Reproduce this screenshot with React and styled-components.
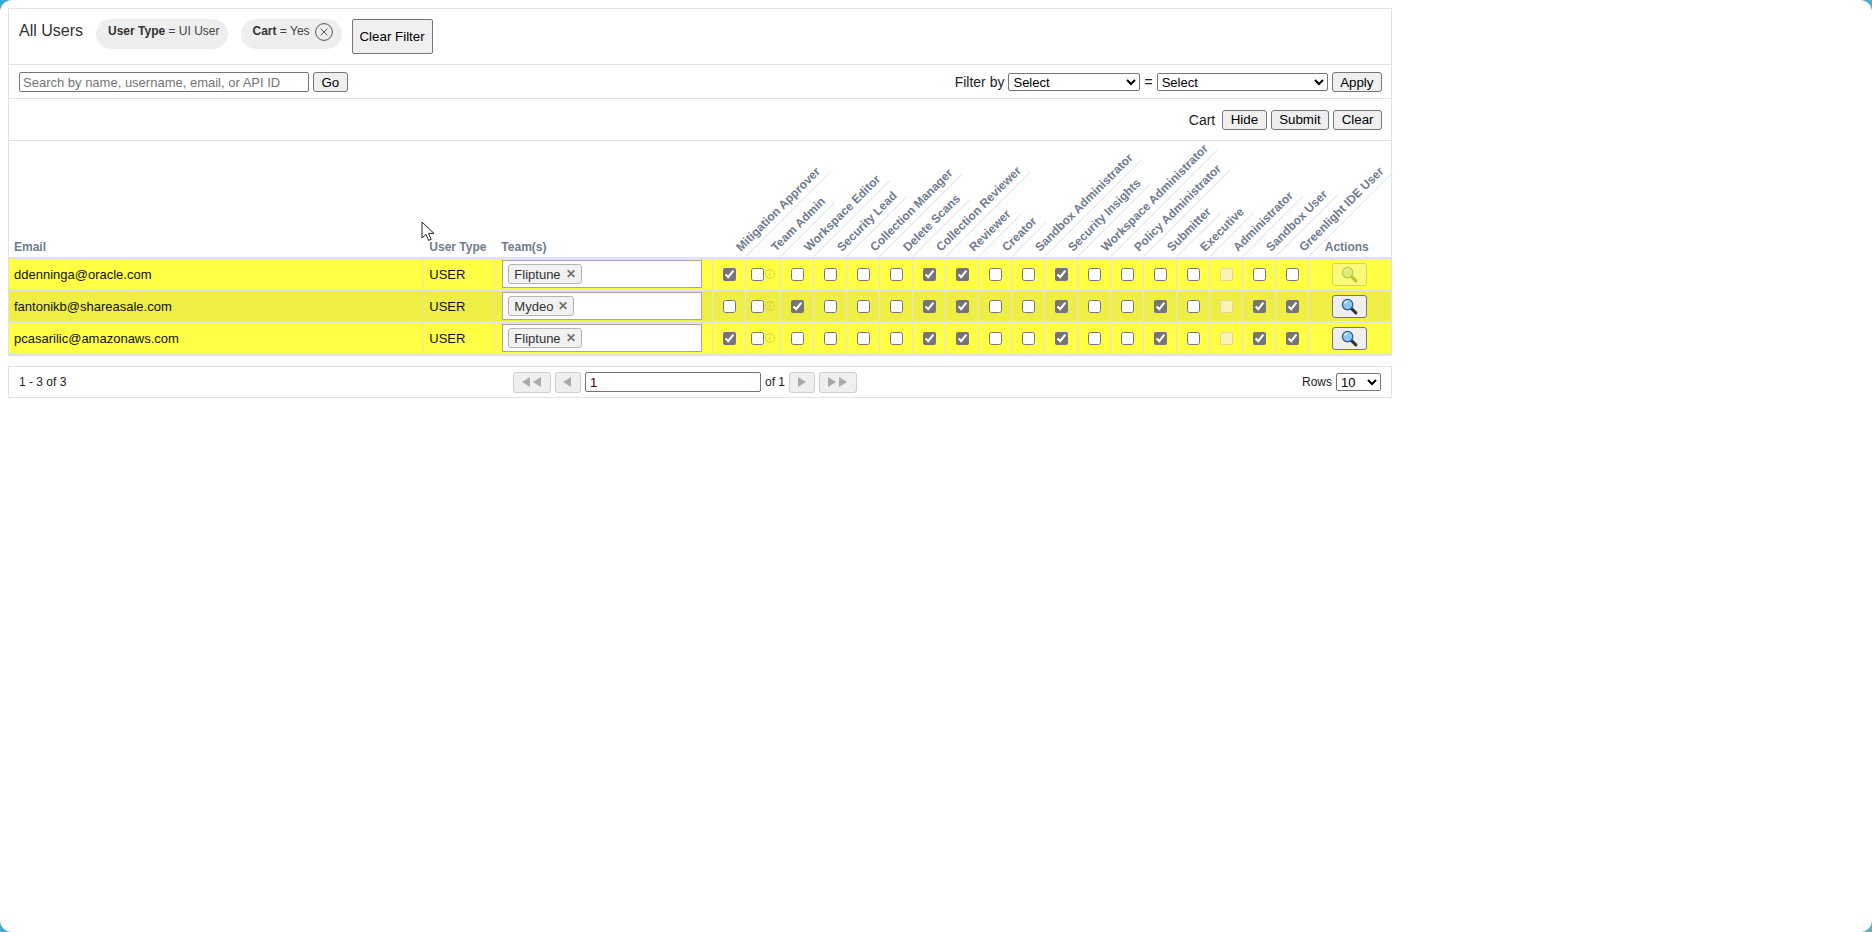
import React from 'react';
import styled, { createGlobalStyle } from 'styled-components';

const roles = [
  'Mitigation Approver', 'Team Admin', 'Workspace Editor', 'Security Lead', 'Collection Manager', 'Delete Scans',
  'Collection Reviewer', 'Reviewer', 'Creator', 'Sandbox Administrator', 'Security Insights', 'Workspace Administrator',
  'Policy Administrator', 'Submitter', 'Executive', 'Administrator', 'Sandbox User', 'Greenlight IDE User',
];

const users = [
  { email: 'ddenninga@oracle.com', team: 'Fliptune', checked: [0, 6, 7, 10], locked: true },
  { email: 'fantonikb@shareasale.com', team: 'Mydeo', checked: [2, 6, 7, 10, 13, 16, 17], alt: true },
  { email: 'pcasarilic@amazonaws.com', team: 'Fliptune', checked: [0, 6, 7, 10, 13, 16, 17] },
];

function App() {
  return (
    <>
      <GlobalStyle />
      <Page>
        <Panel>
          <TitleBar>
            <Title>All Users</Title>
            <FilterChip>
              <b>User Type</b> = UI User
            </FilterChip>
            <FilterChip $closable>
              <b>Cart</b> = Yes
              <ChipClose viewBox="0 0 18 18">
                <circle cx="9" cy="9" r="8.4" fill="none" stroke="#555" strokeWidth="1" />
                <path d="M5.6 5.6l6.8 6.8M12.4 5.6l-6.8 6.8" stroke="#555" strokeWidth="1" fill="none" />
              </ChipClose>
            </FilterChip>
            <ClearFilter>Clear Filter</ClearFilter>
          </TitleBar>

          <SearchBar>
            <SearchInput placeholder="Search by name, username, email, or API ID" />
            <Button>Go</Button>
            <FilterGroup>
              <Label>Filter by</Label>
              <Select $width={132}><option>Select</option></Select>
              <Label>=</Label>
              <Select $width={171}><option>Select</option></Select>
              <Button>Apply</Button>
            </FilterGroup>
          </SearchBar>

          <CartBar>
            <CartLabel>Cart</CartLabel>
            <Button>Hide</Button>
            <Button>Submit</Button>
            <Button>Clear</Button>
          </CartBar>

          <Table>
            <colgroup>
              <col style={{ width: 414 }} />
              <col style={{ width: 72 }} />
              <col style={{ width: 217 }} />
              <col style={{ width: 33 }} />
              <col style={{ width: 35 }} />
              {roles.slice(2).map(r => <col key={r} style={{ width: 33 }} />)}
              <col style={{ width: 82 }} />
            </colgroup>
            <thead>
              <tr>
                <Th $pad={5}>Email</Th>
                <Th $pad={6}>User Type</Th>
                <Th $pad={6}>Team(s)</Th>
                {roles.map(role => (
                  <RoleTh key={role}>
                    <RoleLabel>{role}</RoleLabel>
                  </RoleTh>
                ))}
                <ActionsTh>Actions</ActionsTh>
              </tr>
            </thead>
            <tbody>
              {users.map(user => (
                <Row key={user.email} $alt={user.alt}>
                  <Td>{user.email}</Td>
                  <Td $pad={6}>USER</Td>
                  <TeamTd>
                    <TeamBox>
                      <TeamChip>
                        {user.team}
                        <TeamRemove>✕</TeamRemove>
                      </TeamChip>
                    </TeamBox>
                  </TeamTd>
                  {roles.map((role, i) => (
                    <CheckTd key={role}>
                      <CheckWrap $info={i === 1}>
                        <Check
                          type="checkbox"
                          readOnly
                          checked={user.checked.includes(i)}
                          disabled={i === 15}
                        />
                        {i === 1 && <InfoIcon />}
                      </CheckWrap>
                    </CheckTd>
                  ))}
                  <CheckTd>
                    <ViewButton disabled={user.locked}>
                      <Magnifier />
                    </ViewButton>
                  </CheckTd>
                </Row>
              ))}
            </tbody>
          </Table>
        </Panel>

        <Pager>
          <PagerCount>1 - 3 of 3</PagerCount>
          <PagerControls>
            <PagerButton $wide disabled><Triangles dir="left" count={2} /></PagerButton>
            <PagerButton disabled><Triangles dir="left" count={1} /></PagerButton>
            <PageInput defaultValue="1" />
            <PageOf>of 1</PageOf>
            <PagerButton disabled><Triangles dir="right" count={1} /></PagerButton>
            <PagerButton $wide disabled><Triangles dir="right" count={2} /></PagerButton>
          </PagerControls>
          <PagerRows>
            <RowsLabel>Rows</RowsLabel>
            <Select $width={45}><option>10</option></Select>
          </PagerRows>
        </Pager>

        <Cursor viewBox="0 0 14 21">
          <path d="M1 1v16l4-3.6 2.6 6 2.6-1.1-2.6-5.9h5.4z" fill="#fff" stroke="#222" strokeWidth="1" />
        </Cursor>
      </Page>
    </>
  );
}

export default App;

function InfoIcon() {
  return (
    <InfoSvg viewBox="0 0 10 10">
      <circle cx="5" cy="5" r="4.4" fill="none" stroke="#d2d24a" strokeWidth="1" />
      <path d="M5 2.2v1.2M5 4.4v3.4" stroke="#d2d24a" strokeWidth="1" fill="none" />
    </InfoSvg>
  );
}

function Magnifier() {
  return (
    <svg width="17" height="17" viewBox="0 0 16 16">
      <path d="M9.6 9.8l4.4 4.2" stroke="#333" strokeWidth="2.8" strokeLinecap="round" fill="none" />
      <circle cx="6.2" cy="6.2" r="4.9" fill="#8fc6f0" stroke="#2a5f8f" strokeWidth="1.2" />
      <path d="M3.5 5.2a3 3 0 0 1 2.7-2" stroke="#e4f3fd" strokeWidth="1.2" fill="none" />
    </svg>
  );
}

function Triangles({ dir, count }) {
  const d = dir === 'left' ? 'M8 0v10L0 5z' : 'M0 0v10l8-5z';
  return (
    <svg width={count === 2 ? 20 : 9} height="10" viewBox={count === 2 ? '0 0 20 10' : '0 0 9 10'}>
      <path d={d} fill="#aaa" />
      {count === 2 && <path d={d} fill="#aaa" transform="translate(11 0)" />}
    </svg>
  );
}

const GlobalStyle = createGlobalStyle`
  html, body {
    margin: 0;
    padding: 0;
    background: linear-gradient(135deg, #3fa6d8 0%, #5fb0c4 100%);
  }
  body {
    font-family: "Liberation Sans", Arial, sans-serif;
    font-size: 12px;
    color: #000;
  }
`;

const Page = styled.div`
  position: relative;
  box-sizing: border-box;
  height: 932px;
  padding: 8px 480px 0 8px;
  background: #fff;
  border-radius: 12px;
  overflow: hidden;
`;

const Panel = styled.div`
  border: 1px solid #e0e3e6;
`;

const TitleBar = styled.div`
  display: flex;
  align-items: flex-start;
  box-sizing: border-box;
  height: 56px;
  padding: 10px 0 0 10px;
  border-bottom: 1px solid #e0e3e6;
`;

const Title = styled.h1`
  margin: 0 13px 0 0;
  font-size: 16px;
  font-weight: 400;
  line-height: 24px;
  color: #333;
`;

const FilterChip = styled.div`
  box-sizing: border-box;
  height: 30px;
  margin-right: ${props => (props.$closable ? '10px' : '13px')};
  padding: ${props => (props.$closable ? '5px 9px 0 12px' : '5px 8px 0 12px')};
  background: #eee;
  border-radius: 15px;
  font-size: 12px;
  line-height: 15px;
  color: #444;
  white-space: pre;

  b {
    color: #333;
  }
`;

const ChipClose = styled.svg`
  display: inline-block;
  vertical-align: top;
  width: 18px;
  height: 18px;
  margin: -1px 0 0 5px;
`;

const Button = styled.button`
  box-sizing: border-box;
  height: 20px;
  padding: 0 7.5px;
  background: #efefef;
  border: 1px solid #767676;
  border-radius: 3px;
  font-family: "Liberation Sans", Arial, sans-serif;
  font-size: 13.33px;
  color: #000;
`;

const ClearFilter = styled(Button)`
  height: 35px;
  width: 81px;
  padding: 0;
  border-radius: 2px;
`;

const SearchBar = styled.div`
  display: flex;
  align-items: center;
  gap: 4px;
  box-sizing: border-box;
  height: 34px;
  padding: 1px 9px 0 10px;
  border-bottom: 1px solid #e0e3e6;
`;

const SearchInput = styled.input`
  box-sizing: border-box;
  width: 290px;
  height: 20px;
  padding: 1px 3px;
  border: 1px solid #767676;
  border-radius: 2px;
  font-family: "Liberation Sans", Arial, sans-serif;
  font-size: 13px;
  &::placeholder {
    color: #757575;
  }
`;

const FilterGroup = styled.div`
  display: flex;
  align-items: center;
  gap: 4px;
  margin-left: auto;
`;

const Label = styled.span`
  font-size: 14px;
  color: #222;
`;

const Select = styled.select`
  box-sizing: border-box;
  width: ${props => props.$width}px;
  height: 18px;
  background: #fff;
  border: 1px solid #767676;
  border-radius: 2px;
  font-family: "Liberation Sans", Arial, sans-serif;
  font-size: 13px;
  color: #000;
`;

const CartBar = styled.div`
  display: flex;
  align-items: center;
  gap: 4px;
  justify-content: flex-end;
  box-sizing: border-box;
  height: 42px;
  padding: 0 9px 0 0;
  border-bottom: 1px solid #e0e3e6;
`;

const CartLabel = styled(Label)`
  margin-right: 3px;
`;

const Table = styled.table`
  width: 1382px;
  table-layout: fixed;
  border-collapse: separate;
  border-spacing: 0;
`;

const Th = styled.th`
  box-sizing: border-box;
  height: 118px;
  padding: 0 0 3px ${props => props.$pad || 4}px;
  border-bottom: 2px solid #e1e3e6;
  vertical-align: bottom;
  text-align: left;
  font-size: 12px;
  font-weight: 700;
  color: #6f7c90;
  white-space: nowrap;
`;

const RoleTh = styled(Th)`
  position: relative;
  padding: 0;
`;

const ActionsTh = styled(Th)`
  padding-left: 16px;
`;

const RoleLabel = styled.span`
  position: absolute;
  left: 100%;
  bottom: 0;
  padding: 0 6px 3px 0;
  line-height: 14px;
  border-bottom: 1px solid #e2e4e8;
  transform-origin: left bottom;
  transform: rotate(-45deg);
  color: #6f7c90;
`;

const Row = styled.tr`
  background: ${props => (props.$alt ? '#eeee44' : '#ffff44')};
`;

const Td = styled.td`
  box-sizing: border-box;
  height: 32px;
  padding: 0 0 0 ${props => props.$pad || 5}px;
  border-right: 1px solid #e6e6a0;
  border-bottom: 2px solid #e1e3e6;
  font-size: 13px;
  color: #111;
  white-space: nowrap;
`;

const TeamTd = styled(Td)`
  padding: 0 0 0 7px;
  border-right: 1px solid #e1e3e6;
`;

const TeamBox = styled.div`
  display: flex;
  align-items: center;
  box-sizing: border-box;
  width: 200px;
  height: 28px;
  padding-left: 5px;
  background: #fff;
  border: 1px solid #a6a6ad;
`;

const TeamChip = styled.span`
  display: flex;
  align-items: center;
  gap: 5px;
  box-sizing: border-box;
  height: 20px;
  padding: 0 5px 0 5px;
  background: #f1f1f1;
  border: 1px solid #b4b4b4;
  border-radius: 3px;
  font-size: 13px;
  color: #333;
`;

const TeamRemove = styled.span`
  font-size: 12px;
  font-weight: 700;
  color: #707070;
`;

const CheckTd = styled(Td)`
  padding: 0 0 0 1px;
  border-right: 1px solid #e1e3e6;
  text-align: center;
  &:last-child {
    padding: 0;
    border-right: 0;
  }
`;

const CheckWrap = styled.div`
  display: flex;
  align-items: center;
  justify-content: ${props => (props.$info ? 'flex-start' : 'center')};
  padding-left: ${props => (props.$info ? '4px' : '0')};
`;

const Check = styled.input`
  width: 13px;
  height: 13px;
  margin: 0;
  accent-color: #757575;
  &:disabled {
    appearance: none;
    box-sizing: border-box;
    background: #f8f3b4;
    border: 1px solid #dcd8a0;
    border-radius: 2px;
  }
`;

const InfoSvg = styled.svg`
  width: 10px;
  height: 10px;
  margin-left: 1px;
`;

const ViewButton = styled.button`
  display: inline-flex;
  align-items: center;
  justify-content: center;
  box-sizing: border-box;
  width: 35px;
  height: 23px;
  margin-top: 1px;
  padding: 0;
  background: #efefef;
  border: 1px solid #767676;
  border-radius: 3px;
  &:disabled {
    opacity: 0.3;
  }
`;

const Pager = styled.div`
  display: grid;
  grid-template-columns: 1fr auto 1fr;
  align-items: center;
  box-sizing: border-box;
  height: 32px;
  margin-top: 10px;
  padding: 0 10px 0 10px;
  border: 1px solid #e0e3e6;
`;

const PagerCount = styled.span`
  font-size: 12px;
  color: #222;
`;

const PagerControls = styled.div`
  display: flex;
  align-items: center;
  gap: 4px;
  margin-left: -30px;
`;

const PagerButton = styled.button`
  display: inline-flex;
  align-items: center;
  justify-content: center;
  box-sizing: border-box;
  width: ${props => (props.$wide ? '38px' : '26px')};
  height: 21px;
  padding: 0;
  background: #efefef;
  border: 1px solid #cfcfcf;
  border-radius: 3px;
`;

const PageInput = styled.input`
  box-sizing: border-box;
  width: 176px;
  height: 20px;
  padding: 1px 4px;
  border: 1px solid #767676;
  border-radius: 2px;
  font-family: "Liberation Sans", Arial, sans-serif;
  font-size: 13px;
  color: #400;
`;

const PageOf = styled.span`
  font-size: 12px;
  color: #222;
`;

const PagerRows = styled.div`
  display: flex;
  align-items: center;
  justify-content: flex-end;
  gap: 4px;
`;

const RowsLabel = styled.span`
  font-size: 12px;
  color: #222;
`;

const Cursor = styled.svg`
  position: absolute;
  left: 421px;
  top: 221px;
  width: 14px;
  height: 21px;
`;
